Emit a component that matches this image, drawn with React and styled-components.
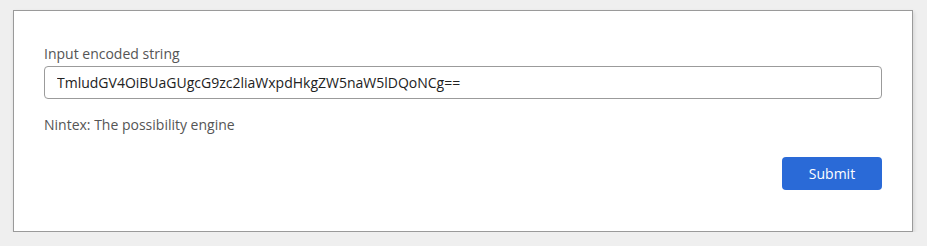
import React, { useState } from "react";
import styled, { createGlobalStyle } from "styled-components";

const GlobalStyle = createGlobalStyle`
  body {
    margin: 0;
    background: #efefef;
    font-family: "Open Sans", "Liberation Sans", sans-serif;
  }
`;

const Page = styled.div`
  padding: 10px 0 0 13px;
`;

const Card = styled.form`
  box-sizing: border-box;
  width: 900px;
  height: 222px;
  background: #ffffff;
  border: 1px solid #9a9a9a;
  box-shadow: 1px 2px 4px rgba(0, 0, 0, 0.12);
  padding: 33px 31px 0 30px;
  display: flex;
  flex-direction: column;
`;

const Label = styled.label`
  font-size: 14px;
  line-height: 20px;
  color: #555;
  margin-bottom: 2px;
`;

const Input = styled.input`
  box-sizing: border-box;
  width: 838px;
  height: 33px;
  border: 1px solid #9b9b9b;
  border-radius: 4px;
  padding: 0 12px;
  font-family: "Open Sans", "Liberation Sans", sans-serif;
  font-size: 14px;
  color: #222;
  outline: none;
`;

const Output = styled.div`
  margin-top: 16px;
  font-size: 14px;
  line-height: 20px;
  color: #555;
`;

const Actions = styled.div`
  display: flex;
  justify-content: flex-end;
  width: 838px;
  margin-top: 22px;
`;

const Button = styled.button`
  width: 100px;
  height: 33px;
  border: none;
  border-radius: 4px;
  background: #2a6ad7;
  color: #fff;
  font-family: "Open Sans", "Liberation Sans", sans-serif;
  font-size: 14px;
  cursor: pointer;
`;

export default function App() {
  const [value, setValue] = useState("TmludGV4OiBUaGUgcG9zc2liaWxpdHkgZW5naW5lDQoNCg==");

  return (
    <Page>
      <GlobalStyle />
      <Card onSubmit={(e) => e.preventDefault()}>
        <Label>Input encoded string</Label>
        <Input value={value} onChange={(e) => setValue(e.target.value)} />
        <Output>Nintex: The possibility engine</Output>
        <Actions>
          <Button type="submit">Submit</Button>
        </Actions>
      </Card>
    </Page>
  );
}
